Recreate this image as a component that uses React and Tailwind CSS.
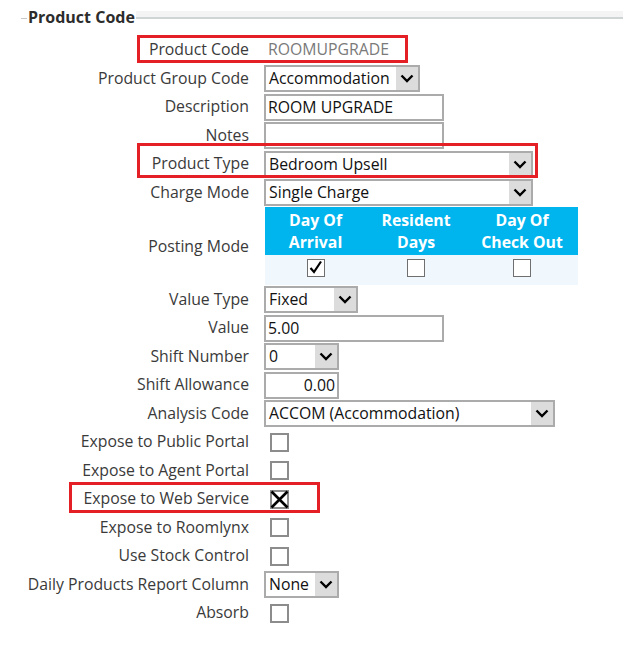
import React from 'react';

const Chevron = () => (
  <svg width="14" height="9" viewBox="0 0 14 9">
    <path d="M1.5 1.5 L7 7 L12.5 1.5" fill="none" stroke="#000" strokeWidth="2.4" />
  </svg>
);

const Select = ({ value, width }) => (
  <div className={`flex h-[27px] items-stretch border-2 border-[#ababab] bg-white ${width}`}>
    <span className="flex-1 overflow-hidden whitespace-nowrap pl-[3px] leading-[23px] text-[#111]">{value}</span>
    <span className="flex w-[22px] items-center justify-center bg-[#dcdcdc]">
      <Chevron />
    </span>
  </div>
);

const Input = ({ value, width, right }) => (
  <div className={`h-[27px] border-2 border-[#ababab] bg-white px-[2px] leading-[23px] text-[#111] ${width} ${right ? 'text-right' : ''}`}>
    {value}
  </div>
);

const Box = ({ crossed }) => (
  <div className="relative ml-[6px] h-[19px] w-[19px] border-2 border-[#8c8c8c] bg-white">
    {crossed && (
      <svg className="absolute -left-[2px] -top-[2px]" width="19" height="19" viewBox="0 0 19 19">
        <path d="M1.5 1.5 L17.5 17.5 M17.5 1.5 L1.5 17.5" stroke="#000" strokeWidth="2.6" />
      </svg>
    )}
  </div>
);

const SmallBox = ({ checked }) => (
  <div className="relative h-[18px] w-[18px] border-[1.5px] border-[#6f6f6f] bg-white">
    {checked && (
      <svg className="absolute left-0 top-0" width="15" height="15" viewBox="0 0 15 15">
        <path d="M2.5 8 L6 12 L13 1.5" fill="none" stroke="#000" strokeWidth="2.2" />
      </svg>
    )}
  </div>
);

const Row = ({ label, children }) => (
  <>
    <div className="flex h-[28.5px] items-center justify-end whitespace-nowrap text-[#3a3a3a]">{label}</div>
    <div className="flex h-[28.5px] items-center">{children}</div>
  </>
);

export default function App() {
  return (
    <div className="relative h-[647px] w-[623px] overflow-hidden bg-white text-[15.8px] [font-family:'Open_Sans',sans-serif]">
      <div className="flex items-end pl-[21px] pt-[11px]">
        <div className="mb-[2px] h-[1px] w-[6px] self-center bg-[#c8c8c8]" />
        <span className="-mt-[4px] px-[1px] text-[16px] font-bold leading-[20px] text-[#2c2c2c]">Product Code</span>
        <div className="mb-[8px] h-[8px] flex-1 border-b-2 border-[#cfd4d4] bg-[#f3f4f3]" />
      </div>

      <div className="mt-[9px] grid grid-cols-[249px_1fr] gap-x-[15px]">
        <Row label="Product Code">
          <span className="pl-[4px] text-[#7a7a7a]">ROOMUPGRADE</span>
        </Row>
        <Row label="Product Group Code">
          <Select value="Accommodation" width="w-[156px]" />
        </Row>
        <Row label="Description">
          <Input value="ROOM UPGRADE" width="w-[180px]" />
        </Row>
        <Row label="Notes">
          <Input value="" width="w-[180px]" />
        </Row>
        <Row label="Product Type">
          <Select value="Bedroom Upsell" width="w-[269px]" />
        </Row>
        <Row label="Charge Mode">
          <Select value="Single Charge" width="w-[269px]" />
        </Row>

        <div className="flex h-[78.5px] items-center justify-end pt-[2px] text-[#3a3a3a]">Posting Mode</div>
        <div className="h-[78.5px] pl-[1px]">
          <div className="w-[313px]">
            <div className="grid h-[48px] grid-cols-[101px_100px_112px] bg-[#00b5ee] font-bold leading-[22px] text-white">
              <div className="flex flex-col items-center justify-center"><span>Day Of</span><span>Arrival</span></div>
              <div className="flex flex-col items-center justify-center"><span>Resident</span><span>Days</span></div>
              <div className="flex flex-col items-center justify-center"><span>Day Of</span><span>Check Out</span></div>
            </div>
            <div className="grid h-[30px] grid-cols-[101px_100px_112px] items-start bg-[#f0f7fd] pt-[4px]">
              <div className="flex justify-center"><SmallBox checked /></div>
              <div className="flex justify-center"><SmallBox /></div>
              <div className="flex justify-center"><SmallBox /></div>
            </div>
          </div>
        </div>

        <Row label="Value Type">
          <Select value="Fixed" width="w-[94px]" />
        </Row>
        <Row label="Value">
          <Input value="5.00" width="w-[180px]" />
        </Row>
        <Row label="Shift Number">
          <Select value="0" width="w-[75px]" />
        </Row>
        <Row label="Shift Allowance">
          <Input value="0.00" width="w-[75px]" right />
        </Row>
        <Row label="Analysis Code">
          <Select value="ACCOM (Accommodation)" width="w-[291px]" />
        </Row>
        <Row label="Expose to Public Portal"><Box /></Row>
        <Row label="Expose to Agent Portal"><Box /></Row>
        <Row label="Expose to Web Service"><Box crossed /></Row>
        <Row label="Expose to Roomlynx"><Box /></Row>
        <Row label="Use Stock Control"><Box /></Row>
        <Row label="Daily Products Report Column">
          <Select value="None" width="w-[75px]" />
        </Row>
        <Row label="Absorb"><Box /></Row>
      </div>

      <div className="pointer-events-none absolute left-[137px] top-[35px] h-[28px] w-[271px] border-[3px] border-[#e41f26]" />
      <div className="pointer-events-none absolute left-[137px] top-[143px] h-[35px] w-[401px] border-[3px] border-[#e41f26]" />
      <div className="pointer-events-none absolute left-[69px] top-[482px] h-[31px] w-[251px] border-[3px] border-[#e41f26]" />
    </div>
  );
}
